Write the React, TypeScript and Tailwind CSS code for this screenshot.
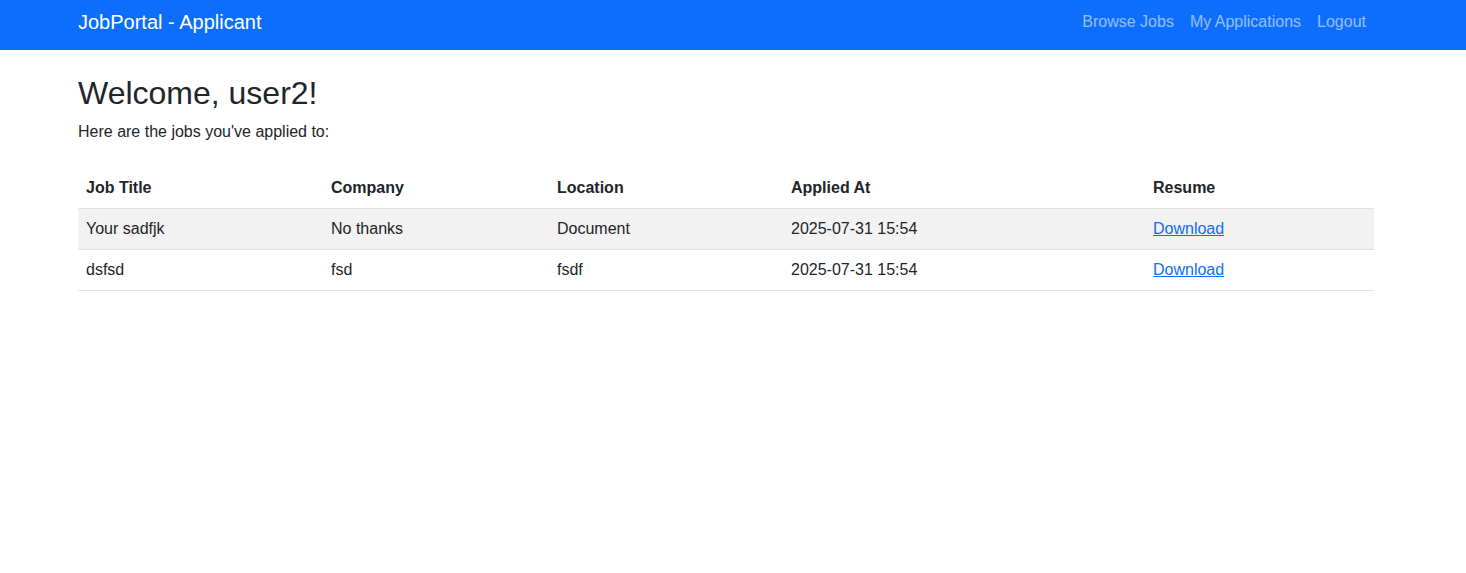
const rows = [
  { title: "Your sadfjk", company: "No thanks", location: "Document", applied: "2025-07-31 15:54" },
  { title: "dsfsd", company: "fsd", location: "fsdf", applied: "2025-07-31 15:54" },
];

export default function App() {
  return (
    <div className="min-h-[573px] bg-white text-[#212529] font-['Liberation_Sans',Arial,sans-serif]">
      <nav className="h-[50px] bg-[#0d6efd]">
        <div className="ml-[78px] w-[1296px] h-full pb-[6px] flex items-center justify-between">
          <a className="text-[20px] text-white leading-[30px]">JobPortal - Applicant</a>
          <ul className="flex">
            {["Browse Jobs", "My Applications", "Logout"].map((l) => (
              <li key={l} className="px-2 text-[16px] leading-6 text-white/55">
                {l}
              </li>
            ))}
          </ul>
        </div>
      </nav>

      <div className="ml-[78px] w-[1296px] pt-6">
        <h2 className="text-[32px] leading-[38px] font-medium mb-2">Welcome, user2!</h2>
        <p className="text-[16px] leading-6 mb-6">Here are the jobs you've applied to:</p>

        <table className="w-full border-collapse text-[16px] leading-6">
          <colgroup>
            <col className="w-[245px]" />
            <col className="w-[226px]" />
            <col className="w-[234px]" />
            <col className="w-[362px]" />
            <col className="w-[229px]" />
          </colgroup>
          <thead>
            <tr className="border-b border-[#dee2e6]">
              {["Job Title", "Company", "Location", "Applied At", "Resume"].map((h) => (
                <th key={h} className="px-2 py-2 text-left font-bold">
                  {h}
                </th>
              ))}
            </tr>
          </thead>
          <tbody>
            {rows.map((r, i) => (
              <tr key={i} className={`border-b border-[#dee2e6] ${i % 2 === 0 ? "bg-[#f2f2f2]" : ""}`}>
                <td className="px-2 py-2">{r.title}</td>
                <td className="px-2 py-2">{r.company}</td>
                <td className="px-2 py-2">{r.location}</td>
                <td className="px-2 py-2">{r.applied}</td>
                <td className="px-2 py-2">
                  <a className="text-[#0d6efd] underline">Download</a>
                </td>
              </tr>
            ))}
          </tbody>
        </table>
      </div>
    </div>
  );
}
